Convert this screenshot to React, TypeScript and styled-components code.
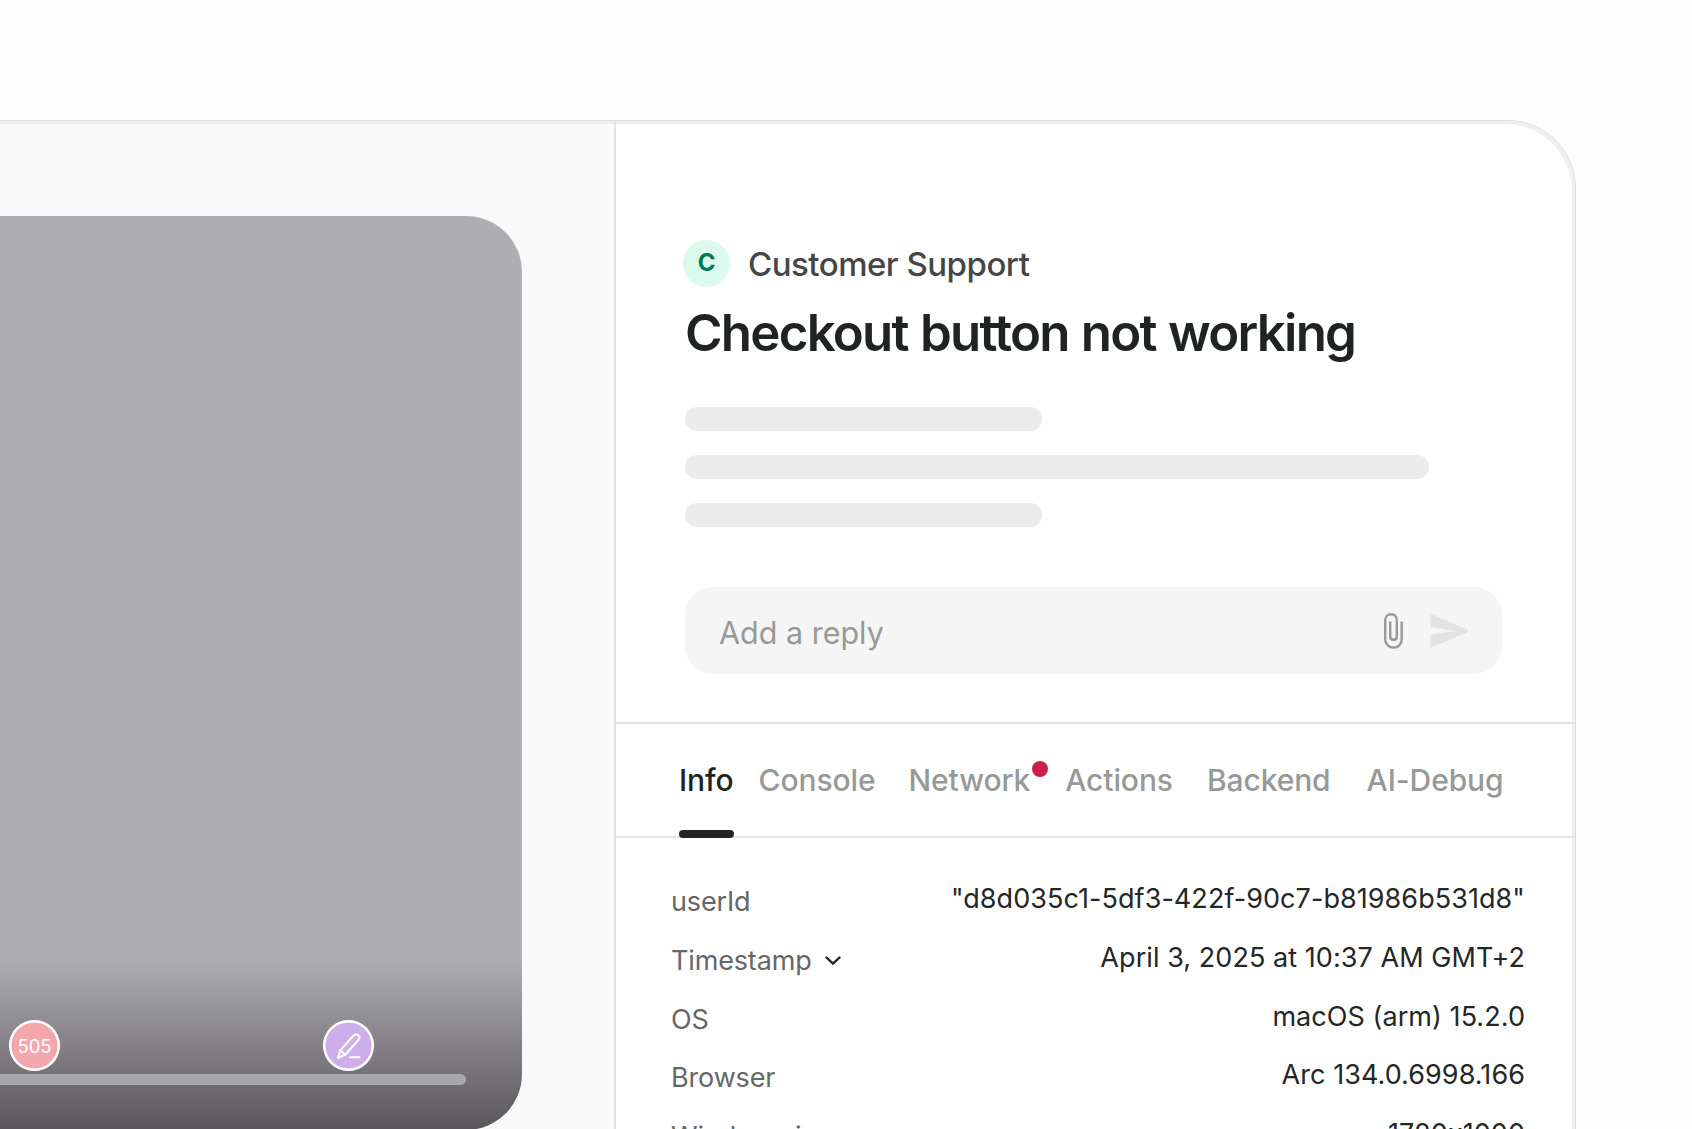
import React from 'react';
import styled, {createGlobalStyle} from 'styled-components';

const GlobalStyle = createGlobalStyle`
  * { box-sizing: border-box; }

  body {
    margin: 0;
    background: #fdfdfd;
    font-family: Inter, "Liberation Sans", sans-serif;
    overflow: hidden;
  }
`;

const Page = styled.div`
  width: 1692px;
  height: 1129px;
  padding-top: 120px;
  overflow: hidden;
`;

const Window = styled.div`
  display: flex;
  width: 1576px;
  height: 1080px;
  border: 1px solid #dfdfdf;
  border-left: 0;
  border-radius: 0 68px 0 0;
  background: #fff;
  box-shadow: inset -3px 3px 0 #efefef;
`;

const Stage = styled.div`
  width: 616px;
  border-right: 2px solid #e1e1e1;
  padding-top: 95px;
  background: #f9f9f9;
  box-shadow: inset 0 3px 0 #ededed;
`;

const Player = styled.div`
  display: flex;
  flex-direction: column;
  justify-content: flex-end;
  width: 522px;
  height: 914px;
  padding-bottom: 45px;
  border-radius: 0 56px 56px 0;
  background: linear-gradient(#aeadb2 0, #aeadb2 744px, #58565b 914px);
`;

const Markers = styled.div`
  display: flex;
  gap: 263px;
  padding: 0 0 3px 9px;
`;

const Marker = styled.div<{$color: string}>`
  display: flex;
  justify-content: center;
  align-items: center;
  width: 51px;
  height: 51px;
  border-radius: 50%;
  background: ${({$color}) => $color};
  box-shadow: inset 0 0 0 2.4px #fff;
  color: #fff;
  font-size: 18.5px;
`;

const Track = styled.div`
  width: 466px;
  height: 11px;
  border-radius: 0 6px 6px 0;
  background: #a8a8aa;
`;

const Panel = styled.div`
  flex: 1;
  display: flex;
  flex-direction: column;
`;

const Summary = styled.div`
  display: flex;
  flex-direction: column;
  height: 603px;
  padding: 119px 72px 0 67px;
  border-bottom: 2px solid #e0e0e0;
`;

const Project = styled.div`
  display: flex;
  align-items: center;
  height: 47px;
  color: #464646;
  font-size: 33px;
  font-weight: 500;
  letter-spacing: -0.5px;
`;

const Avatar = styled.div`
  display: flex;
  justify-content: center;
  align-items: center;
  width: 47px;
  height: 47px;
  margin-right: 18px;
  padding-bottom: 2px;
  border-radius: 50%;
  background: #dcf9ed;
  color: #007a55;
  font-size: 24px;
  font-weight: 700;
`;

const Title = styled.h1`
  margin: 15px 0 0 2px;
  color: #1f2423;
  font-size: 51px;
  font-weight: 600;
  letter-spacing: -1.75px;
  line-height: 62px;
  word-spacing: 1px;
  white-space: nowrap;
`;

const Skeleton = styled.div`
  display: flex;
  flex-direction: column;
  gap: 24px;
  margin: 43px 0 60px 2px;
`;

const SkeletonLine = styled.div<{$width: number}>`
  width: ${({$width}) => $width}px;
  height: 24px;
  border-radius: 12px;
  background: #ebebeb;
`;

const Reply = styled.div`
  display: flex;
  align-items: center;
  width: 817px;
  height: 87px;
  margin-left: 2px;
  padding: 4px 33px 0 34px;
  border-radius: 28px;
  background: #f5f5f5;
  color: #979998;
  font-size: 30.5px;

  span { flex: 1; }
  svg { margin-top: -4px; }
`;

const SendIcon = styled.svg`
  margin-left: 27px;
`;

const Tabs = styled.div`
  display: flex;
  height: 114px;
  padding-left: 63px;
  border-bottom: 2px solid #e4e4e4;
`;

const Tab = styled.div<{$gap?: number; $active?: boolean}>`
  display: flex;
  align-items: center;
  position: relative;
  height: 113px;
  margin-right: ${({$gap = 0}) => $gap}px;
  padding-bottom: 1px;
  color: ${({$active}) => ($active ? '#1f2322' : '#979998')};
  font-size: 30px;
  font-weight: 500;
  letter-spacing: -0.1px;
  white-space: nowrap;

  &::after {
    content: '';
    display: ${({$active}) => ($active ? 'block' : 'none')};
    position: absolute;
    bottom: -1px;
    left: 0;
    width: 55px;
    height: 8px;
    border-radius: 4px;
    background: #212524;
  }
`;

const Dot = styled.i`
  position: absolute;
  top: 37px;
  right: -18px;
  width: 16px;
  height: 16px;
  border-radius: 50%;
  background: #ca1e4b;
`;

const Details = styled.dl`
  margin: 0;
  padding: 31px 50px 0 55px;
`;

const DetailRow = styled.div`
  display: flex;
  justify-content: space-between;
  height: 58.75px;
  font-size: 27px;
  line-height: 60px;
`;

const Label = styled.dt`
  display: flex;
  align-items: center;
  height: 60px;
  margin-top: 3px;
  color: #646766;
  letter-spacing: -0.15px;

  svg { margin-left: 13px; }
`;

const Value = styled.dd`
  margin: 0;
  color: #242726;
  letter-spacing: 0.06px;
`;

const PencilIcon = () => (
    <svg width='26' height='28' viewBox='0 0 26 28' fill='none' stroke='#fff' strokeWidth='2' strokeLinejoin='round' strokeLinecap='round'>
        <path d='M2 26L4.200 18.500L18 3.200C20.500 0.800 25 4 22.800 7.500L9.500 22.500Z'/>
        <path d='M4.200 18.500L9.500 22.500M14 25.200H23.500'/>
    </svg>
);

const ClipIcon = () => (
    <svg width='19' height='36' viewBox='0 0 19 36' fill='none' stroke='#979998' strokeWidth='2.400'>
        <path d='M17.700 8.500V26.200C17.700 31.500 14 34.600 9.700 34.600C5 34.600 1.200 31.500 1.200 26.200V7.200C1.200 3.500 4 1.200 7.200 1.200C10.500 1.200 12.800 3.500 12.800 7.200V23.500C12.800 25.800 11.500 26.800 9.500 26.800C7.500 26.800 6.200 25.800 6.200 23.500V8.500'/>
    </svg>
);

const ChevronIcon = () => (
    <svg width='16' height='10' viewBox='0 0 16 10' fill='none' stroke='#1f2322' strokeWidth='2.400' strokeLinecap='round' strokeLinejoin='round'>
        <path d='M1.500 1.500L8 7.700L14.500 1.500'/>
    </svg>
);

const tabs = [
    {name: 'Info', gap: 25, active: true},
    {name: 'Console', gap: 33},
    {name: 'Network', gap: 35, dot: true},
    {name: 'Actions', gap: 34},
    {name: 'Backend', gap: 36},
    {name: 'AI-Debug'}
];

const details = [
    {label: 'userId', value: '"d8d035c1-5df3-422f-90c7-b81986b531d8"'},
    {label: 'Timestamp', value: 'April 3, 2025 at 10:37 AM GMT+2', expandable: true},
    {label: 'OS', value: 'macOS (arm) 15.2.0'},
    {label: 'Browser', value: 'Arc 134.0.6998.166'},
    {label: 'Window size', value: '1720x1000'}
];

function App() {
    return (
        <Page>
            <GlobalStyle/>
            <Window>
                <Stage>
                    <Player>
                        <Markers>
                            <Marker $color='#f4a7aa'>505</Marker>
                            <Marker $color='#ceaeea'><PencilIcon/></Marker>
                        </Markers>
                        <Track/>
                    </Player>
                </Stage>
                <Panel>
                    <Summary>
                        <Project><Avatar>C</Avatar>Customer Support</Project>
                        <Title>Checkout button not working</Title>
                        <Skeleton>
                            <SkeletonLine $width={357}/>
                            <SkeletonLine $width={744}/>
                            <SkeletonLine $width={357}/>
                        </Skeleton>
                        <Reply>
                            <span>Add a reply</span>
                            <ClipIcon/>
                            <SendIcon width='39' height='34' viewBox='0 0 39 34' fill='#e1e2e2'>
                                <path d='M1.500 0.500L37.500 15.500Q39 17 37.500 18.300L1.500 33.500Q0.500 33.500 0.500 32.500V20.500L28 17L0.500 13.200V1.500Q0.500 0.500 1.500 0.500Z'/>
                            </SendIcon>
                        </Reply>
                    </Summary>
                    <Tabs>
                        {tabs.map(({name, gap, active, dot}) => (
                            <Tab key={name} $gap={gap} $active={active}>{name}{dot && <Dot/>}</Tab>
                        ))}
                    </Tabs>
                    <Details>
                        {details.map(({label, value, expandable}) => (
                            <DetailRow key={label}>
                                <Label>{label}{expandable && <ChevronIcon/>}</Label>
                                <Value>{value}</Value>
                            </DetailRow>
                        ))}
                    </Details>
                </Panel>
            </Window>
        </Page>
    );
}

export default App;
